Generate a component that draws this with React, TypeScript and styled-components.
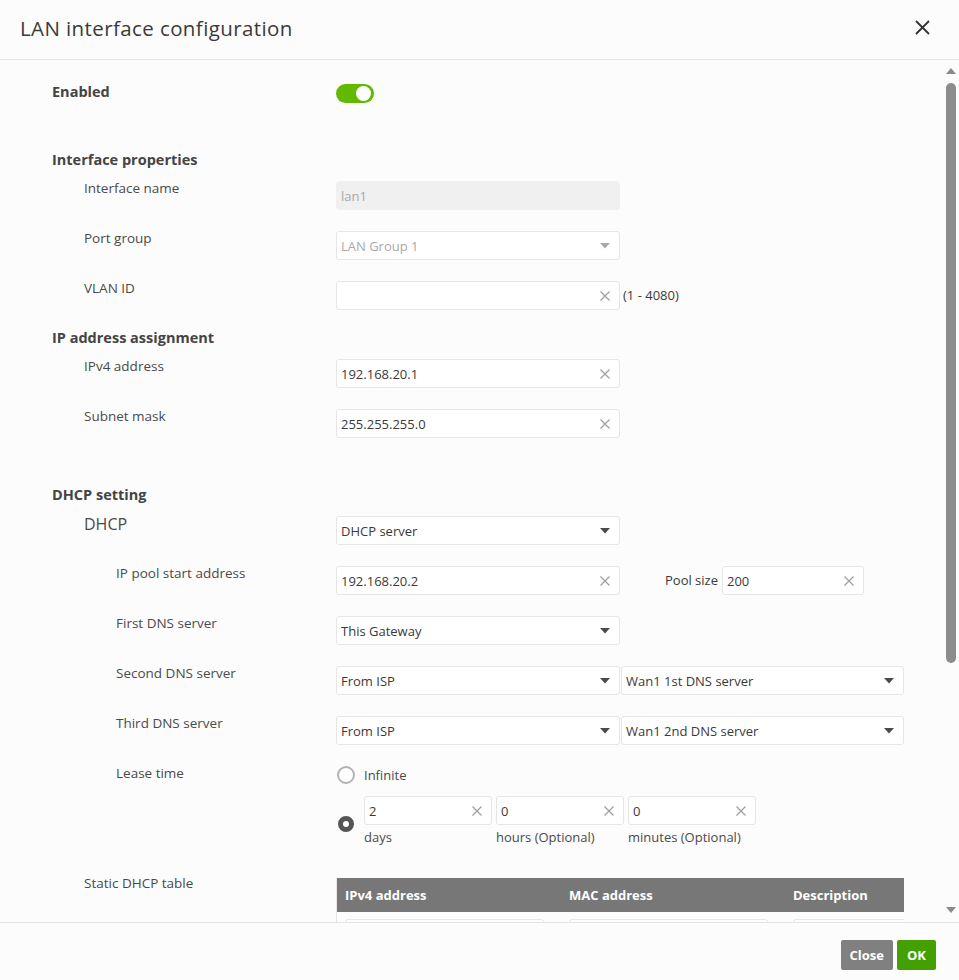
import React from 'react';
import styled, { createGlobalStyle } from 'styled-components';

const GlobalStyle = createGlobalStyle`
  html, body {
    margin: 0;
    padding: 0;
    background: #fcfcfc;
  }
  body {
    font-family: "Open Sans", "Noto Sans", "Liberation Sans", sans-serif;
    color: #4a4a4a;
  }
`;

const Dialog = styled.div`
  width: 959px;
  height: 980px;
  display: flex;
  flex-direction: column;
  background: #fcfcfc;
`;

const Header = styled.div`
  height: 60px;
  border-bottom: 1px solid #e4e4e4;
  display: flex;
  align-items: center;
  justify-content: space-between;
  padding: 0 29px 4px 20px;
  box-sizing: border-box;
  flex-shrink: 0;
`;

const Title = styled.div`
  font-size: 20.5px;
  letter-spacing: 0.4px;
  color: #3a3a3a;
`;

const CloseIcon = styled.button`
  border: 0;
  background: none;
  padding: 0;
  width: 15px;
  height: 15px;
  display: flex;
  cursor: pointer;
`;

const Body = styled.div`
  flex: 1;
  position: relative;
  overflow: hidden;
`;

const Content = styled.div`
  padding: 25px 0 0 52px;
`;

const ScrollTrack = styled.div`
  position: absolute;
  top: 0;
  right: 3px;
  width: 10px;
  height: 100%;
`;

const ScrollArrow = styled.div<{ $down?: boolean }>`
  position: absolute;
  left: 0;
  ${(p) => (p.$down ? 'top: 847px;' : 'top: 8px;')}
  width: 0;
  height: 0;
  border-left: 5px solid transparent;
  border-right: 5px solid transparent;
  ${(p) => (p.$down ? 'border-top: 6px solid #8a8a8a;' : 'border-bottom: 6px solid #8a8a8a;')}
`;

const ScrollThumb = styled.div`
  position: absolute;
  left: 0;
  top: 23px;
  width: 10px;
  height: 580px;
  border-radius: 5px;
  background: #8c8c8c;
`;

const Footer = styled.div`
  height: 58px;
  border-top: 1px solid #e4e4e4;
  box-sizing: border-box;
  display: flex;
  justify-content: flex-end;
  align-items: flex-start;
  gap: 4px;
  padding: 17px 23px 0 0;
  flex-shrink: 0;
`;

const Button = styled.button<{ $primary?: boolean }>`
  height: 30px;
  padding: 0 ${(p) => (p.$primary ? '10px' : '9px')};
  border: 0;
  border-radius: 2px;
  background: ${(p) => (p.$primary ? '#43a000' : '#808080')};
  color: #fff;
  font-family: inherit;
  font-size: 13px;
  font-weight: 700;
  cursor: pointer;
`;

const Heading = styled.div`
  font-size: 14.5px;
  font-weight: 700;
  line-height: 18px;
  color: #444;
  margin-bottom: 12px;
`;

const Row = styled.div<{ $gap?: number }>`
  display: flex;
  align-items: flex-start;
  min-height: 29px;
  margin-bottom: ${(p) => p.$gap ?? 21}px;
`;

const Label = styled.div<{ $indent?: number; $big?: boolean; $bold?: boolean; $shift?: number }>`
  width: 284px;
  box-sizing: border-box;
  padding-left: ${(p) => (p.$indent ?? 0) * 32}px;
  margin-top: ${(p) => p.$shift ?? (p.$big ? -2 : -1)}px;
  font-size: ${(p) => (p.$big ? 16 : p.$bold ? 14.5 : 13.5)}px;
  font-weight: ${(p) => (p.$bold ? 700 : 400)};
  color: ${(p) => (p.$bold ? '#444' : '#4a4a4a')};
  line-height: ${(p) => (p.$big ? 20 : 16)}px;
  flex-shrink: 0;
`;

const Toggle = styled.div<{ $on: boolean }>`
  width: 38px;
  height: 19px;
  margin-top: -1px;
  border-radius: 10px;
  background: ${(p) => (p.$on ? '#62b900' : '#ccc')};
  position: relative;
  &::after {
    content: '';
    position: absolute;
    top: 2px;
    ${(p) => (p.$on ? 'right: 3px;' : 'left: 3px;')}
    width: 15px;
    height: 15px;
    border-radius: 50%;
    background: #fff;
  }
`;

const Field = styled.div<{ $w?: number; $disabled?: boolean; $filled?: boolean }>`
  width: ${(p) => p.$w ?? 284}px;
  height: 29px;
  box-sizing: border-box;
  border: 1px solid ${(p) => (p.$filled ? '#f0f0f0' : '#e6e6e6')};
  border-radius: 3px;
  background: ${(p) => (p.$filled ? '#f0f0f0' : '#fff')};
  display: flex;
  align-items: center;
  padding: 0 9px 0 4px;
  font-size: 13px;
  color: ${(p) => (p.$disabled ? '#a8a8a8' : '#3a3a3a')};
  flex-shrink: 0;
`;

const FieldText = styled.span`
  flex: 1;
  white-space: nowrap;
  overflow: hidden;
`;

const Hint = styled.span`
  font-size: 13px;
  color: #3a3a3a;
  margin-left: 3px;
  line-height: 29px;
`;

const InlineLabel = styled.span`
  font-size: 13px;
  color: #3a3a3a;
  margin: 0 4px 0 45px;
  line-height: 29px;
`;

const Pair = styled.div`
  display: flex;
  gap: 1px;
`;

const LeaseBlock = styled.div`
  display: flex;
  flex-direction: column;
  gap: 12px;
`;

const LeaseLine = styled.div`
  display: flex;
  align-items: center;
`;

const RadioSlot = styled.div`
  width: 28px;
  display: flex;
  align-items: center;
  flex-shrink: 0;
`;

const Radio = styled.span<{ $checked?: boolean }>`
  display: inline-block;
  box-sizing: border-box;
  border-radius: 50%;
  ${(p) =>
    p.$checked
      ? `width: 16px; height: 16px; margin: 6px 0 0 2px; border: 5px solid #555; background: #fff;`
      : `width: 18px; height: 18px; margin-left: 1px; border: 2px solid #b3b3b3; background: #fff;`}
`;

const RadioText = styled.span`
  font-size: 13px;
  color: #4a4a4a;
`;

const DurationGroup = styled.div`
  display: flex;
  gap: 4px;
`;

const Duration = styled.div`
  display: flex;
  flex-direction: column;
  gap: 3px;
`;

const UnitLabel = styled.span`
  font-size: 13px;
  line-height: 18px;
  color: #4a4a4a;
`;

const Table = styled.div`
  width: 568px;
  overflow: hidden;
  border-left: 1px solid #e6e6e6;
  box-sizing: border-box;
`;

const TableHead = styled.div`
  display: grid;
  grid-template-columns: 224px 224px 1fr;
  height: 34px;
  background: #777;
  align-items: center;
`;

const HeadCell = styled.div`
  color: #fff;
  font-size: 13px;
  font-weight: 700;
  padding-left: 8px;
`;

const TableRow = styled.div`
  display: grid;
  grid-template-columns: 224px 224px 224px;
  padding-top: 7px;
`;

const CellInput = styled.div`
  margin-left: 8px;
  width: 199px;
  height: 29px;
  border: 1px solid #e6e6e6;
  border-radius: 3px;
  box-sizing: border-box;
  background: #fff;
`;

const ClearX = () => (
  <svg width="10" height="10" viewBox="0 0 10 10">
    <path d="M0.5 0.5 L9.5 9.5 M9.5 0.5 L0.5 9.5" stroke="#9e9e9e" strokeWidth="1.2" fill="none" />
  </svg>
);

const Caret = ({ light }: { light?: boolean }) => (
  <svg width="10" height="6" viewBox="0 0 10 6">
    <path d="M0 0 L10 0 L5 5.5 Z" fill={light ? '#a8a8a8' : '#4a4a4a'} />
  </svg>
);

const TextInput = ({ value, w, clear = true }: { value: string; w?: number; clear?: boolean }) => (
  <Field $w={w}>
    <FieldText>{value}</FieldText>
    {clear && <ClearX />}
  </Field>
);

const Select = ({ value, w, disabled }: { value: string; w?: number; disabled?: boolean }) => (
  <Field $w={w} $disabled={disabled}>
    <FieldText>{value}</FieldText>
    <Caret light={disabled} />
  </Field>
);

export default function App() {
  return (
    <Dialog>
      <GlobalStyle />
      <Header>
        <Title>LAN interface configuration</Title>
        <CloseIcon aria-label="close">
          <svg width="15" height="15" viewBox="0 0 15 15">
            <path d="M1 1 L14 14 M14 1 L1 14" stroke="#333" strokeWidth="1.8" fill="none" />
          </svg>
        </CloseIcon>
      </Header>

      <Body>
        <Content>
          <Row $gap={37}>
            <Label $bold>Enabled</Label>
            <Toggle $on />
          </Row>

          <Heading>Interface properties</Heading>
          <Row>
            <Label $indent={1}>Interface name</Label>
            <Field $filled $disabled>
              <FieldText>lan1</FieldText>
            </Field>
          </Row>
          <Row>
            <Label $indent={1}>Port group</Label>
            <Select value="LAN Group 1" disabled />
          </Row>
          <Row $gap={19}>
            <Label $indent={1}>VLAN ID</Label>
            <TextInput value="" />
            <Hint>(1 - 4080)</Hint>
          </Row>

          <Heading>IP address assignment</Heading>
          <Row>
            <Label $indent={1}>IPv4 address</Label>
            <TextInput value="192.168.20.1" />
          </Row>
          <Row $gap={48}>
            <Label $indent={1}>Subnet mask</Label>
            <TextInput value="255.255.255.0" />
          </Row>

          <Heading>DHCP setting</Heading>
          <Row>
            <Label $indent={1} $big>DHCP</Label>
            <Select value="DHCP server" />
          </Row>
          <Row>
            <Label $indent={2}>IP pool start address</Label>
            <TextInput value="192.168.20.2" />
            <InlineLabel>Pool size</InlineLabel>
            <TextInput value="200" w={142} />
          </Row>
          <Row>
            <Label $indent={2}>First DNS server</Label>
            <Select value="This Gateway" />
          </Row>
          <Row>
            <Label $indent={2}>Second DNS server</Label>
            <Pair>
              <Select value="From ISP" />
              <Select value="Wan1 1st DNS server" w={283} />
            </Pair>
          </Row>
          <Row>
            <Label $indent={2}>Third DNS server</Label>
            <Pair>
              <Select value="From ISP" />
              <Select value="Wan1 2nd DNS server" w={283} />
            </Pair>
          </Row>
          <Row $gap={32}>
            <Label $indent={2}>Lease time</Label>
            <LeaseBlock>
              <LeaseLine>
                <RadioSlot>
                  <Radio />
                </RadioSlot>
                <RadioText>Infinite</RadioText>
              </LeaseLine>
              <LeaseLine>
                <RadioSlot>
                  <Radio $checked />
                </RadioSlot>
                <DurationGroup>
                  <Duration>
                    <TextInput value="2" w={128} />
                    <UnitLabel>days</UnitLabel>
                  </Duration>
                  <Duration>
                    <TextInput value="0" w={128} />
                    <UnitLabel>hours (Optional)</UnitLabel>
                  </Duration>
                  <Duration>
                    <TextInput value="0" w={128} />
                    <UnitLabel>minutes (Optional)</UnitLabel>
                  </Duration>
                </DurationGroup>
              </LeaseLine>
            </LeaseBlock>
          </Row>

          <Row>
            <Label $indent={1} $shift={-3}>Static DHCP table</Label>
            <Table>
              <TableHead>
                <HeadCell>IPv4 address</HeadCell>
                <HeadCell>MAC address</HeadCell>
                <HeadCell>Description</HeadCell>
              </TableHead>
              <TableRow>
                <CellInput />
                <CellInput />
                <CellInput />
              </TableRow>
            </Table>
          </Row>
        </Content>

        <ScrollTrack>
          <ScrollArrow />
          <ScrollThumb />
          <ScrollArrow $down />
        </ScrollTrack>
      </Body>

      <Footer>
        <Button>Close</Button>
        <Button $primary>OK</Button>
      </Footer>
    </Dialog>
  );
}
